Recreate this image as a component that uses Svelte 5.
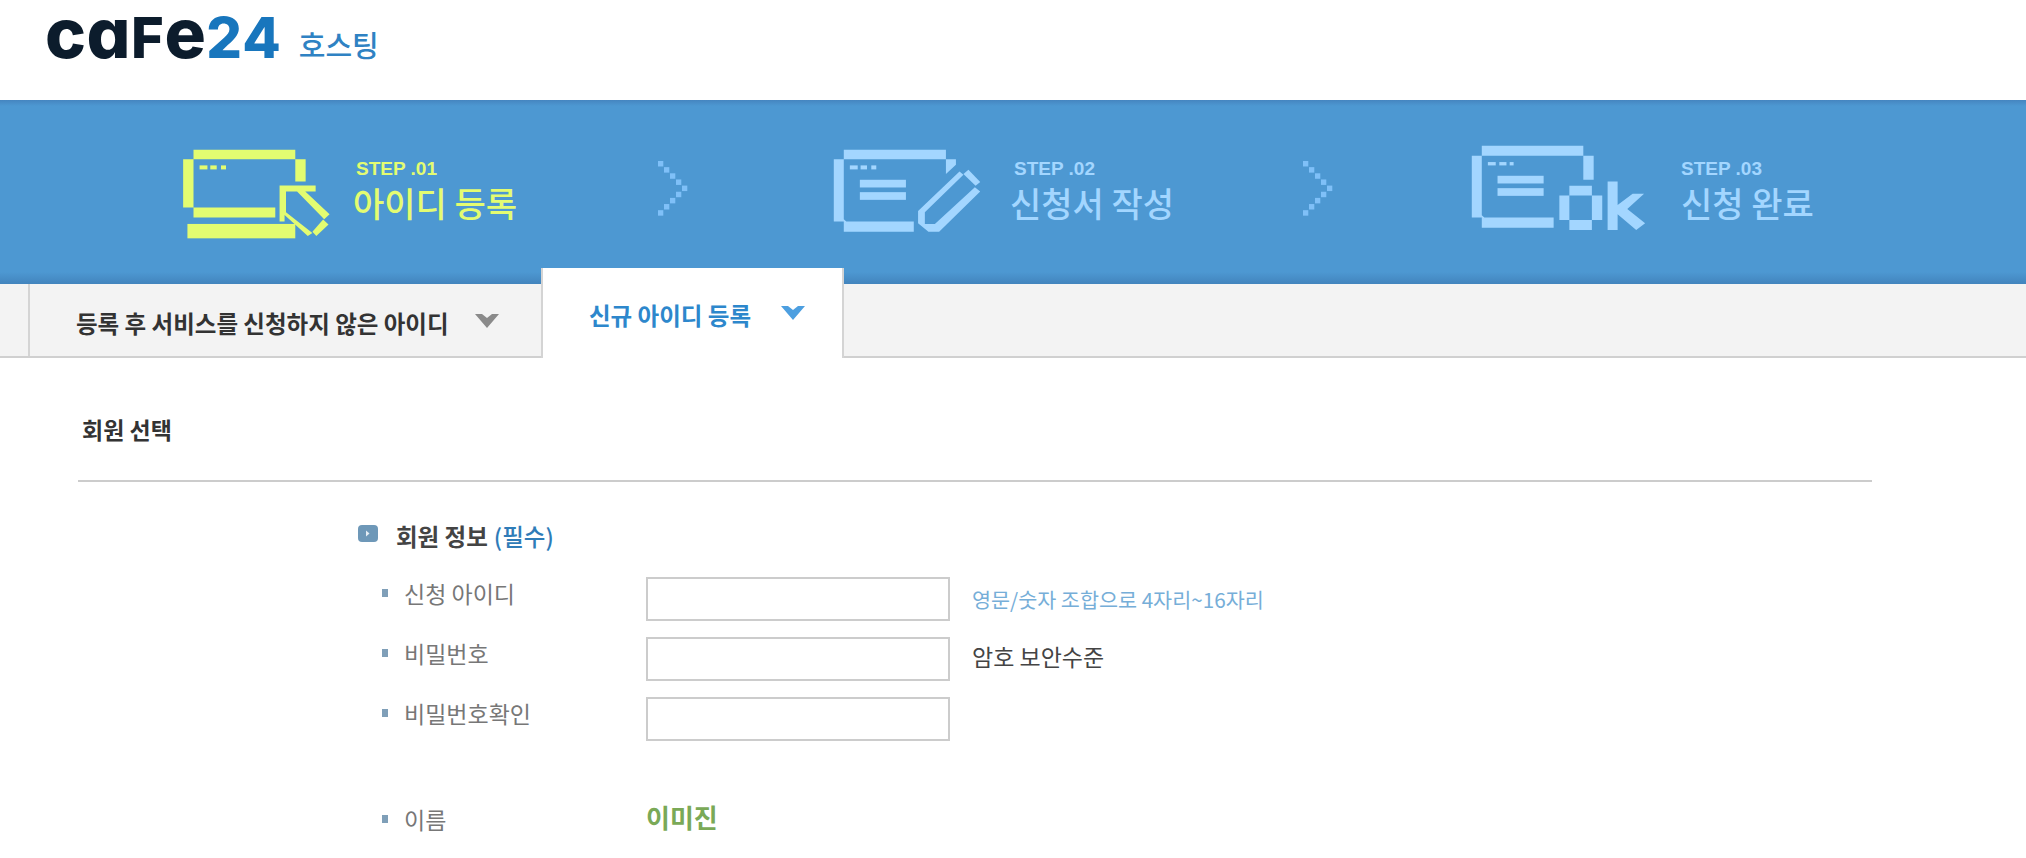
<script>
  const chevron = [0, 1, 2, 3, 4, 3, 2, 1, 0];

  const fields = [
    { label: '신청 아이디', hint: '영문/숫자 조합으로 4자리~16자리', hintClass: 'hint' },
    { label: '비밀번호', hint: '암호 보안수준', hintClass: 'level' },
    { label: '비밀번호확인' }
  ];
</script>

{#snippet arrow()}
  <svg class="chevron" viewBox="0 0 85 161" preserveAspectRatio="none" aria-hidden="true">
    {#each chevron as col, i}
      <rect x={col * 17} y={i * 18} width="15" height="16" />
    {/each}
  </svg>
{/snippet}

{#snippet caret()}
  <svg class="caret" width="24" height="14" viewBox="0 0 24 14" aria-hidden="true"><path d="M0 0H7L12 4L17 0H24L12 14Z" /></svg>
{/snippet}

<header class="top">
  <div class="logo"><span class="word">ca<span class="cap">f</span>e</span><span class="num">24</span></div>
  <span class="logo-sub">호스팅</span>
</header>

<section class="steps">
  <div class="step current one">
    <svg class="icon" width="150" height="92" viewBox="60 70 420 275" preserveAspectRatio="none" aria-hidden="true">
      <path d="M95 75H380V104H409V170H380V104H95V248H324V278H95V248H66V104H95Z" />
      <rect x="78" y="297" width="302" height="43" />
      <rect x="112" y="122" width="22" height="12" /><rect x="142" y="122" width="18" height="12" /><rect x="172" y="122" width="14" height="12" />
      <path d="M336 182H437V200H408L476 268L461 283L385 200H354V262L428 324L415 333L350 270V290H336Z" />
      <path d="M458 284L473 299L439 333L428 320Z" />
    </svg>
    <div class="label">
      <span class="no">STEP .01</span>
      <strong>아이디 등록</strong>
    </div>
  </div>
  {@render arrow()}
  <div class="step two">
    <svg class="icon" width="150" height="92" viewBox="90 70 420 275" preserveAspectRatio="none" aria-hidden="true">
      <path d="M123 75H409V104H437V120L409 148V104H123V283L130 290H319V320H123V290H95V104H123Z" />
      <rect x="140" y="122" width="22" height="12" /><rect x="170" y="122" width="18" height="12" /><rect x="200" y="122" width="14" height="12" />
      <rect x="168" y="165" width="129" height="23" /><rect x="168" y="202" width="129" height="23" />
      <path d="M331 258L447 140L458 150L350 262V297H378L490 187L505 200L390 320H360L331 295Z" />
      <path d="M472 135L505 172L492 183L458 148Z" />
    </svg>
    <div class="label">
      <span class="no">STEP .02</span>
      <strong>신청서 작성</strong>
    </div>
  </div>
  {@render arrow()}
  <div class="step three">
    <svg class="icon" width="178" height="92" viewBox="505 58 498 275" preserveAspectRatio="none" aria-hidden="true">
      <path d="M538 63H822V93H851V165H822V93H538V271L545 278H739V308H538V278H510V93H538Z" />
      <rect x="555" y="112" width="22" height="10" /><rect x="587" y="112" width="20" height="10" /><rect x="616" y="112" width="11" height="10" />
      <rect x="582" y="153" width="129" height="23" /><rect x="582" y="190" width="129" height="23" />
      <path d="M783 183H846V212H875V285H846V315H783V285H755V212H783ZM783 212V285H846V212Z" fill-rule="evenodd" />
      <path d="M890 170H918V240L960 207H992L945 252L995 295L970 315L918 268V315H890Z" />
    </svg>
    <div class="label">
      <span class="no">STEP .03</span>
      <strong>신청 완료</strong>
    </div>
  </div>
</section>

<nav class="tabs">
  <div class="tab-spacer"></div>
  <div class="tab">
    등록 후 서비스를 신청하지 않은 아이디
    {@render caret()}
  </div>
  <div class="tab active">
    신규 아이디 등록
    {@render caret()}
  </div>
</nav>

<main class="content">
  <h2>회원 선택</h2>
  <div class="form">
    <h3>
      <svg class="bullet" width="20" height="17" viewBox="0 0 20 17" aria-hidden="true">
        <rect width="20" height="17" rx="4" fill="#6e98b8" />
        <path d="M8 5.5L11.5 8.5L8 11.5V5.5Z" fill="#e6eef4" />
      </svg>
      회원 정보 <span>(필수)</span>
    </h3>
    {#each fields as field}
      <div class="row">
        <span class="name">{field.label}</span>
        <input type="text" />
        {#if field.hint}<span class={field.hintClass}>{field.hint}</span>{/if}
      </div>
    {/each}
    <div class="row person">
      <span class="name">이름</span>
      <b>이미진</b>
    </div>
  </div>
</main>

<style>
  :global(body) {
    background: #fff;
    font-family: "Noto Sans CJK KR", "Noto Sans", sans-serif;
    overflow: hidden;
  }

  .top {
    height: 100px;
    display: flex;
    align-items: flex-start;
    padding-left: 45px;
  }
  .logo {
    display: flex;
    align-items: baseline;
    font-family: Inter, sans-serif;
    font-feature-settings: "cv11";
    font-weight: 800;
    line-height: 66px;
  }
  .word {
    color: #0c1c2c;
    font-size: 69px;
    letter-spacing: 0.5px;
  }
  .cap {
    font-size: 56px;
    text-transform: uppercase;
  }
  .num {
    color: #1876bd;
    font-size: 56px;
    letter-spacing: 1px;
  }
  .logo-sub {
    margin: 23px 0 0 17px;
    color: #2f82c3;
    font-size: 29px;
    font-weight: 500;
  }

  .steps {
    height: 184px;
    box-sizing: border-box;
    display: flex;
    align-items: flex-start;
    padding-left: 181px;
    background: linear-gradient(#4585c0, #4d98d2 6px, #4d98d2 172px, #4284bd);
    color: #a3d6ff;
  }
  .step {
    display: flex;
    fill: #a3d6ff;
  }
  .current {
    color: #e3fc71;
    fill: #e3fc71;
  }
  .one {
    margin-top: 48px;
  }
  .two {
    margin: 48px 0 0 144px;
  }
  .three {
    margin: 44px 0 0 137px;
  }
  .icon {
    display: block;
  }
  .label {
    display: flex;
    flex-direction: column;
    width: 165px;
    margin-top: 11px;
    margin-left: 22px;
  }
  .two .label {
    margin-left: 28px;
  }
  .three .label {
    margin: 15px 0 0 33px;
  }
  .no {
    font-family: "Liberation Sans", sans-serif;
    font-size: 19px;
    font-weight: 700;
    line-height: 20px;
    padding-left: 3px;
  }
  .two .no {
    padding-left: 4px;
  }
  .three .no {
    padding-left: 0;
  }
  .label strong {
    font-size: 34px;
    font-weight: 500;
    line-height: 48px;
    white-space: nowrap;
  }
  .chevron {
    width: 30px;
    height: 55px;
    margin: 61px 0 0 140px;
    fill: #7fc0f8;
  }
  .two + .chevron {
    margin-left: 128px;
  }

  .tabs {
    height: 74px;
    box-sizing: border-box;
    display: flex;
    background: #f3f3f3;
    border-bottom: 2px solid #d0d0d0;
    font-size: 23.5px;
    font-weight: 700;
    color: #333;
  }
  .tab-spacer {
    width: 28px;
    border-right: 2px solid #d4d4d4;
  }
  .tab {
    width: 511px;
    box-sizing: border-box;
    display: flex;
    align-items: center;
    gap: 26px;
    padding: 6px 0 0 46px;
    fill: #8a8a8a;
    white-space: nowrap;
  }
  .caret {
    margin-bottom: 4px;
  }
  .tab.active {
    width: 303px;
    height: 90px;
    margin-top: -16px;
    gap: 30px;
    padding: 3px 0 0 46px;
    background: #fff;
    border-left: 2px solid #d4d4d4;
    border-right: 2px solid #d4d4d4;
    color: #2d87cc;
    fill: #4d9fe0;
  }

  .content {
    padding: 0 0 0 78px;
  }
  h2 {
    width: 1794px;
    box-sizing: border-box;
    margin: 0;
    padding: 53px 0 0 4px;
    height: 124px;
    line-height: 36px;
    border-bottom: 2px solid #ccc;
    font-size: 23px;
    font-weight: 700;
    color: #333;
  }
  .form {
    padding-left: 280px;
  }
  h3 {
    display: flex;
    align-items: center;
    gap: 18px;
    margin: 0;
    padding: 36px 0 15px;
    line-height: 36px;
    font-size: 23.5px;
    font-weight: 700;
    color: #444;
  }
  h3 span {
    margin-left: -12px;
    font-weight: 500;
    color: #2f7cb8;
  }
  .bullet {
    margin-bottom: 6px;
  }
  .row {
    display: flex;
    align-items: center;
    height: 60px;
    font-size: 23px;
    color: #777;
  }
  .name {
    width: 288px;
    display: flex;
    align-items: center;
    gap: 16px;
    padding-left: 24px;
    box-sizing: border-box;
    margin-bottom: 12px;
  }
  .name::before {
    content: "";
    width: 6px;
    height: 8px;
    background: #7f9fb8;
  }
  input {
    width: 304px;
    height: 44px;
    box-sizing: border-box;
    margin: 0 22px 0 0;
    border: 2px solid #ccc;
    background: #fff;
  }
  .hint {
    font-size: 20.7px;
    color: #76aed8;
  }
  .level {
    color: #444;
    margin-bottom: 6px;
  }
  .person {
    margin-top: 46px;
  }
  .person b {
    font-size: 26px;
    color: #7aa957;
    margin-bottom: 17px;
  }
</style>
